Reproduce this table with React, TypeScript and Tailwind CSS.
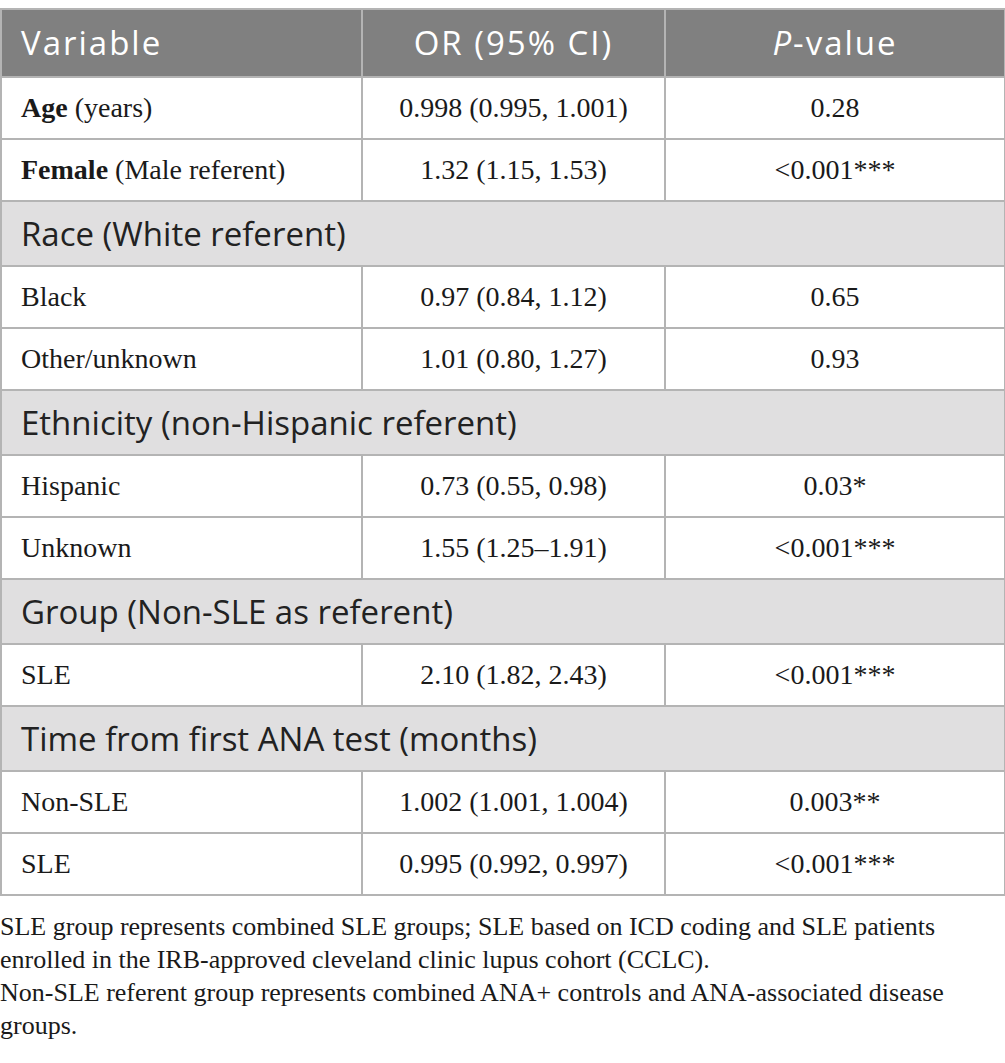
const rows: Array<
  | { kind: "section"; label: string }
  | { kind: "row"; bold?: string; label: string; or: string; p: string }
> = [
  { kind: "row", bold: "Age", label: " (years)", or: "0.998 (0.995, 1.001)", p: "0.28" },
  { kind: "row", bold: "Female", label: " (Male referent)", or: "1.32 (1.15, 1.53)", p: "<0.001***" },
  { kind: "section", label: "Race (White referent)" },
  { kind: "row", label: "Black", or: "0.97 (0.84, 1.12)", p: "0.65" },
  { kind: "row", label: "Other/unknown", or: "1.01 (0.80, 1.27)", p: "0.93" },
  { kind: "section", label: "Ethnicity (non-Hispanic referent)" },
  { kind: "row", label: "Hispanic", or: "0.73 (0.55, 0.98)", p: "0.03*" },
  { kind: "row", label: "Unknown", or: "1.55 (1.25\u20131.91)", p: "<0.001***" },
  { kind: "section", label: "Group (Non-SLE as referent)" },
  { kind: "row", label: "SLE", or: "2.10 (1.82, 2.43)", p: "<0.001***" },
  { kind: "section", label: "Time from first ANA test (months)" },
  { kind: "row", label: "Non-SLE", or: "1.002 (1.001, 1.004)", p: "0.003**" },
  { kind: "row", label: "SLE", or: "0.995 (0.992, 0.997)", p: "<0.001***" },
];

const sans = "font-['Open_Sans',sans-serif]";
const serif = "font-['Liberation_Serif',serif]";
const cell = "border-2 border-[#b4b4b4]";

export default function App() {
  return (
    <div className="w-[1005px] min-h-[1063px] bg-white pt-2">
      <table className="w-[1004px] border-collapse table-fixed">
        <colgroup>
          <col className="w-[361px]" />
          <col className="w-[303px]" />
          <col className="w-[340px]" />
        </colgroup>
        <thead>
          <tr className={`h-[68px] bg-[#808080] text-white text-[33px] tracking-[2px] ${sans}`}>
            <th className={`${cell} text-left font-normal pl-[19px]`}>Variable</th>
            <th className={`${cell} text-center font-normal`}>OR (95% CI)</th>
            <th className={`${cell} text-center font-normal`}>
              <i>P</i>-value
            </th>
          </tr>
        </thead>
        <tbody>
          {rows.map((r, i) =>
            r.kind === "section" ? (
              <tr key={i} className="h-[65px] bg-[#e0dfe0]">
                <td colSpan={3} className={`${cell} pl-[19px] text-[33px] text-[#222] ${sans}`}>
                  {r.label}
                </td>
              </tr>
            ) : (
              <tr key={i} className={`h-[62px] text-[28px] text-[#1a1a1a] ${serif}`}>
                <td className={`${cell} pl-[19px]`}>
                  {r.bold && <b>{r.bold}</b>}
                  {r.label}
                </td>
                <td className={`${cell} text-center`}>{r.or}</td>
                <td className={`${cell} text-center`}>{r.p}</td>
              </tr>
            )
          )}
        </tbody>
      </table>
      <div className={`mt-[14px] text-[26px] leading-[33px] text-[#1a1a1a] ${serif}`}>
        <p>
          SLE group represents combined SLE groups; SLE based on ICD coding and SLE patients
          <br />
          enrolled in the IRB-approved cleveland clinic lupus cohort (CCLC).
        </p>
        <p>
          Non-SLE referent group represents combined ANA+ controls and ANA-associated disease
          <br />
          groups.
        </p>
      </div>
    </div>
  );
}
